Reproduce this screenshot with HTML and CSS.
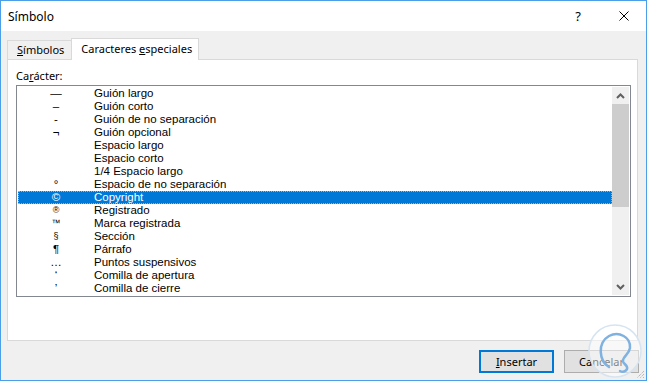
FILE: index.html
```html
<!DOCTYPE html>
<html lang="es">
<head>
    <meta charset="UTF-8">
    <title>Símbolo</title>
    <link rel="stylesheet" href="styles.css">
</head>
<body>
    <div class="window">
        <div class="titlebar">
            <span class="title">Símbolo</span>
            <span class="tb-help">?</span>
            <span class="tb-close">
                <svg width="10" height="10" viewBox="0 0 10 10"><path d="M0.5 0.5 L9.5 9.5 M9.5 0.5 L0.5 9.5" stroke="#000" stroke-width="1" fill="none"/></svg>
            </span>
        </div>

        <div class="body">
            <div class="tabs">
                <div class="tab"><u>S</u>ímbolos</div>
                <div class="tab active">Caracteres <u>e</u>speciales</div>
            </div>

            <div class="panel">
                <div class="label">Ca<u>r</u>ácter:</div>
                <div class="list">
                    <div class="rows">
                        <div class="row"><span class="sym">—</span><span class="name">Guión largo</span></div>
                        <div class="row"><span class="sym">–</span><span class="name">Guión corto</span></div>
                        <div class="row"><span class="sym">-</span><span class="name">Guión de no separación</span></div>
                        <div class="row"><span class="sym">¬</span><span class="name">Guión opcional</span></div>
                        <div class="row"><span class="sym"></span><span class="name">Espacio largo</span></div>
                        <div class="row"><span class="sym"></span><span class="name">Espacio corto</span></div>
                        <div class="row"><span class="sym"></span><span class="name">1/4 Espacio largo</span></div>
                        <div class="row"><span class="sym">°</span><span class="name">Espacio de no separación</span></div>
                        <div class="row selected"><span class="sym">©</span><span class="name">Copyright</span></div>
                        <div class="row"><span class="sym small">®</span><span class="name">Registrado</span></div>
                        <div class="row"><span class="sym small">™</span><span class="name">Marca registrada</span></div>
                        <div class="row"><span class="sym small">§</span><span class="name">Sección</span></div>
                        <div class="row"><span class="sym">¶</span><span class="name">Párrafo</span></div>
                        <div class="row"><span class="sym">…</span><span class="name">Puntos suspensivos</span></div>
                        <div class="row"><span class="sym">‘</span><span class="name">Comilla de apertura</span></div>
                        <div class="row"><span class="sym">’</span><span class="name">Comilla de cierre</span></div>
                    </div>
                    <div class="scrollbar">
                        <div class="sb-btn">
                            <svg width="9" height="6" viewBox="0 0 9 6"><path d="M1 5 L4.5 1.5 L8 5" stroke="#606060" stroke-width="2" fill="none"/></svg>
                        </div>
                        <div class="thumb"></div>
                        <div class="track"></div>
                        <div class="sb-btn">
                            <svg width="9" height="6" viewBox="0 0 9 6"><path d="M1 1 L4.5 4.5 L8 1" stroke="#606060" stroke-width="2" fill="none"/></svg>
                        </div>
                    </div>
                </div>
            </div>

            <div class="buttons">
                <button class="btn default"><u>I</u>nsertar</button>
                <button class="btn">Cancelar</button>
            </div>
        </div>

        <svg class="watermark" width="56" height="58" viewBox="0 0 56 58">
            <circle cx="28" cy="28" r="26" fill="#ffffff" fill-opacity="0.5" stroke="#d6e4f1" stroke-width="1.5"/>
            <path d="M22 44 C12 38 10 20 22 13 C32 8 44 14 43 25 C42 31 37 33 36 37 C35 40 39 41 40 44 C41 47 37 50 33 48" stroke="#7fb2e0" stroke-width="2.5" fill="none" stroke-linecap="round"/>
        </svg>

        <svg class="grip" width="9" height="9" viewBox="0 0 9 9">
            <path d="M8 1 L1 8 M8 4 L4 8 M8 7 L7 8" stroke="#a0a0a0" stroke-width="1" stroke-dasharray="1 1" fill="none"/>
        </svg>
    </div>
</body>
</html>
```

FILE: styles.css
```css
* {
    box-sizing: border-box;
}

body {
    margin: 0;
    font-family: "Noto Sans", "DejaVu Sans", sans-serif;
    font-size: 11px;
    color: #000;
    background: #fff;
}

.window {
    position: relative;
    width: 647px;
    height: 381px;
    border: 1px solid #4a9fe8;
    background: #f0f0f0;
    display: flex;
    flex-direction: column;
    overflow: hidden;
}

.titlebar {
    height: 30px;
    background: #fff;
    display: flex;
    align-items: center;
    padding-left: 7px;
}

.title {
    flex: 1;
    font-size: 12px;
}

.tb-help {
    width: 46px;
    text-align: center;
    font-size: 13px;
}

.tb-close {
    width: 45px;
    height: 30px;
    display: flex;
    align-items: center;
    justify-content: center;
}

.body {
    flex: 1;
    padding: 7px 8px 0 6px;
    display: flex;
    flex-direction: column;
}

.tabs {
    display: flex;
    align-items: flex-end;
    height: 21px;
}

.tab {
    height: 19px;
    line-height: 18px;
    padding: 0 7px 0 9px;
    border: 1px solid #d9d9d9;
    border-bottom: none;
    background: #f0f0f0;
}

.tab.active {
    position: relative;
    z-index: 1;
    height: 22px;
    line-height: 20px;
    margin-left: -1px;
    margin-bottom: -1px;
    padding: 0 6px 0 9px;
    background: #fff;
}

.panel {
    width: 631px;
    height: 282px;
    border: 1px solid #d9d9d9;
    background: #fff;
    padding-left: 8px;
}

.label {
    margin-top: 8px;
    height: 15px;
    line-height: 15px;
}

.list {
    margin-top: 2px;
    width: 615px;
    height: 212px;
    border: 1px solid #828790;
    padding: 1px;
    display: flex;
    font-family: "Liberation Sans", Arial, sans-serif;
    font-size: 11.5px;
}

.rows {
    flex: 1;
}

.row {
    display: flex;
    height: 13px;
    line-height: 13px;
    white-space: nowrap;
}

.row.selected {
    background: #0078d7;
    color: #fff;
    outline: 1px dotted #f5a43c;
    outline-offset: -1px;
}

.sym {
    width: 76px;
    text-align: center;
}

.sym.small {
    font-size: 9px;
}

.scrollbar {
    width: 17px;
    background: #f0f0f0;
    display: flex;
    flex-direction: column;
}

.sb-btn {
    height: 17px;
    display: flex;
    align-items: center;
    justify-content: center;
}

.thumb {
    height: 103px;
    background: #cdcdcd;
}

.track {
    flex: 1;
}

.buttons {
    margin-top: 9px;
    margin-right: -1px;
    display: flex;
    justify-content: flex-end;
    gap: 10px;
}

.btn {
    width: 75px;
    height: 23px;
    border: 1px solid #adadad;
    background: #e1e1e1;
    font-family: inherit;
    font-size: 11px;
    color: #000;
    padding: 0;
}

.btn.default {
    border: 2px solid #0078d7;
}

.watermark {
    position: absolute;
    left: 586px;
    top: 322px;
}

.grip {
    position: absolute;
    right: 1px;
    bottom: 1px;
}
```
